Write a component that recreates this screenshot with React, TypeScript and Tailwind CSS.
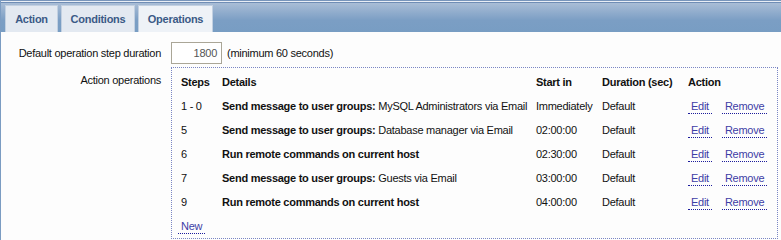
import React from "react";

const rows = [
  { step: "1 - 0", bold: "Send message to user groups:", rest: " MySQL Administrators via Email", start: "Immediately" },
  { step: "5", bold: "Send message to user groups:", rest: " Database manager via Email", start: "02:00:00" },
  { step: "6", bold: "Run remote commands on current host", rest: "", start: "02:30:00" },
  { step: "7", bold: "Send message to user groups:", rest: " Guests via Email", start: "03:00:00" },
  { step: "9", bold: "Run remote commands on current host", rest: "", start: "04:00:00" },
];

function Link({ children }: { children: React.ReactNode }) {
  return (
    <span className="inline-block px-[3px] leading-[14px] text-[#3d3da6] border-b border-dotted border-[#1c1c9c]">
      {children}
    </span>
  );
}

function Tab({ label, active, w }: { label: string; active?: boolean; w: string }) {
  return (
    <div
      className={
        "h-[27px] flex items-center justify-center border border-b-0 border-[#c2d0e1] font-bold text-[#3b5a86] " +
        w +
        (active ? " bg-[#eef2f7]" : " bg-[#e3e9f1]")
      }
    >
      {label}
    </div>
  );
}

export default function App() {
  return (
    <div
      className="w-[781px] h-[240px] overflow-hidden bg-[#fdfdfd] border-l border-[#7b9cc2] text-[11px] text-[#111] tracking-[-0.26px]"
      style={{ fontFamily: '"Liberation Sans", Arial, sans-serif' }}
    >
      <div className="h-[32px] flex flex-col">
        <div className="h-px bg-[#7895bb]" />
        <div className="h-px bg-[#e9eef5]" />
        <div className="h-px bg-[#6f8db5]" />
        <div className="flex-1 bg-gradient-to-b from-[#a9bdd6] via-[#7b9ec4] via-60% to-[#789dc3] flex items-end pl-[4px] gap-[3px]">
          <Tab label="Action" w="w-[53px]" />
          <Tab label="Conditions" w="w-[74px]" />
          <Tab label="Operations" w="w-[75px]" active />
        </div>
      </div>

      <div className="pt-[10px] flex flex-col gap-[3px]">
        <div className="flex items-center h-[22px]">
          <div className="w-[160px] text-right">Default operation step duration</div>
          <div className="ml-[10px] w-[51px] h-[22px] border border-[#aaa697] bg-white pr-[4px] text-[#555] flex items-center justify-end">
            1800
          </div>
          <div className="ml-[5px]">(minimum 60 seconds)</div>
        </div>

        <div className="flex">
          <div className="w-[160px] text-right pt-[5px]">Action operations</div>
          <div className="ml-[10px] w-[607px] h-[172px] border border-dotted border-[#7a86c4] pt-[2px] pl-[9px]">
            <div className="grid grid-cols-[41px_314px_66px_86px_auto] auto-rows-[24px] items-center">
              <div className="font-bold">Steps</div>
              <div className="font-bold">Details</div>
              <div className="font-bold">Start in</div>
              <div className="font-bold">Duration (sec)</div>
              <div className="font-bold">Action</div>
              {rows.map((r, i) => (
                <React.Fragment key={i}>
                  <div>{r.step}</div>
                  <div>
                    <span className="font-bold">{r.bold}</span>
                    {r.rest}
                  </div>
                  <div>{r.start}</div>
                  <div>Default</div>
                  <div className="flex items-center gap-[10px] pt-[1px]">
                    <Link>Edit</Link>
                    <Link>Remove</Link>
                  </div>
                </React.Fragment>
              ))}
              <div className="col-span-5 -ml-[3px] pt-[1px]">
                <Link>New</Link>
              </div>
            </div>
          </div>
        </div>
      </div>
    </div>
  );
}
